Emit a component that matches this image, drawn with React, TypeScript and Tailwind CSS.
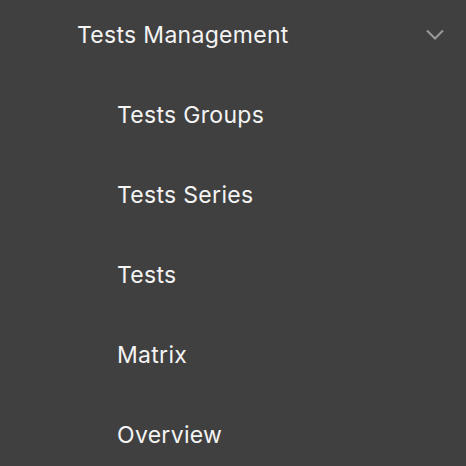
import React from "react";

export default function App() {
  const items = ["Tests Groups", "Tests Series", "Tests", "Matrix", "Overview"];
  return (
    <div className="w-[466px] h-[466px] bg-[#404040] overflow-hidden" style={{ fontFamily: "Inter, 'Noto Sans', sans-serif" }}>
      <div className="h-[70px] flex items-center pl-[77px] pr-[22px] justify-between">
        <span className="text-[23px] tracking-[0.3px] text-[#f4f4f4]">Tests Management</span>
        <svg width="18" height="11" viewBox="0 0 18 11" fill="none" className="mb-[2px]">
          <path d="M1 1.5 L9 9.5 L17 1.5" stroke="#9a9a9a" strokeWidth="2" />
        </svg>
      </div>
      <div className="mt-[5px]">
        {items.map((t) => (
          <div key={t} className="h-[80px] flex items-center pl-[117px]">
            <span className="text-[23px] tracking-[0.3px] text-[#f4f4f4]">{t}</span>
          </div>
        ))}
      </div>
    </div>
  );
}
